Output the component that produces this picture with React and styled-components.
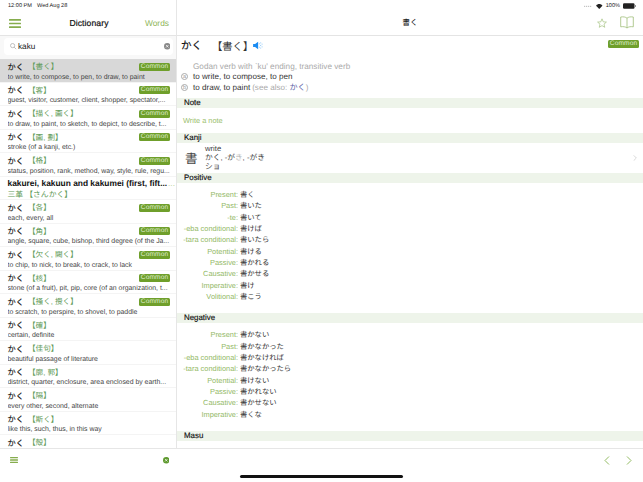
import React from "react";
import styled, { createGlobalStyle } from "styled-components";

const Global = createGlobalStyle`
  html, body { margin: 0; padding: 0; background: #fff; }
  body { font-family: "Liberation Sans", "Noto Sans CJK JP", sans-serif; text-rendering: geometricPrecision; }
  * { box-sizing: border-box; }
`;

const Page = styled.div`
  position: relative; width: 643px; height: 482px; overflow: hidden; display: flex; background: #fff;
`;
const Side = styled.aside`
  width: 177px; flex: none; display: flex; flex-direction: column; height: 100%;
`;
const SideTop = styled.div`
  border-right: 1px solid #e6e6e6; height: 36px; flex: none; display: flex; flex-direction: column; border-bottom: 1px solid #e4e4e4;
`;
const Status = styled.div`
  height: 12px; flex: none; display: flex; align-items: center; gap: ${p => (p.$end ? 3 : 5)}px; font-size: 5.6px; color: #222;
  padding: ${p => (p.$end ? "0 7px 0 0" : "0 8px")};
  justify-content: ${p => (p.$end ? "flex-end" : "flex-start")};
`;
const NavBar = styled.div`
  flex: 1; display: grid; grid-template-columns: 1fr auto 1fr; align-items: center; padding: 0 7px 1px 9px;
`;
const NavTitle = styled.div`
  font-size: 8.6px; color: #111; letter-spacing: .1px; -webkit-text-stroke: .2px #111;
`;
const NavLink = styled.span`
  font-size: 8.4px; color: #8fb65a; justify-self: end;
`;
const SearchWrap = styled.div`
  flex: none; height: 23px; padding: 2px 3px 4px 4px; background: #f8f8f8; border-right: 1px solid #e6e6e6;
`;
const SearchBox = styled.div`
  height: 17px; background: #fff; border-radius: 4px; display: flex; align-items: center; padding: 0 3px 0 6px; gap: 1.5px;
`;
const SearchText = styled.span`
  flex: 1; font-size: 8.2px; color: #222;
`;
const List = styled.div`
  flex: 1; min-height: 0; overflow: hidden; border-right: 1px solid #e6e6e6; background: #f5f5f5;
`;
const Row = styled.div`
  height: 23.5px; padding: 1.5px ${p => (p.$tight ? 1 : 6)}px 0 7.5px; border-bottom: 1.5px solid #f4f4f4; overflow: hidden;
  background: ${p => (p.$selected ? "#d8d8d8" : "#fff")};
`;
const RowHead = styled.div`
  display: flex; align-items: center; height: 12px; white-space: nowrap;
`;
const Kana = styled.span`
  font-size: 8.2px; color: #111; width: 20.5px; flex: none; -webkit-text-stroke: .15px #111;
`;
const Kanji = styled.span`
  flex: 1; font-size: 7.6px; color: #5f9b58;
`;
const Badge = styled.span`
  flex: none; display: block; height: 8px; width: 31px; border-radius: 1.5px; background: #6f9f2b; color: #dfeccc;
  font-size: 6.6px; letter-spacing: .12px; line-height: 8px; text-align: center;
`;
const Meaning = styled.div`
  font-size: 6.9px; line-height: 9px; color: #444; white-space: nowrap; overflow: hidden;
`;
const BoldHead = styled.div`
  font-size: 8.4px; font-weight: 700; color: #111; white-space: nowrap; height: 11.5px; line-height: 11.5px; display: flex; justify-content: space-between;
`;
const Dots = styled.span`
  color: #b9d19a; font-weight: 400;
`;
const GreenLine = styled.div`
  font-size: 7.8px; line-height: 9px; color: #5f9b58; white-space: nowrap;
`;
const Toolbar = styled.div`
  flex: none; height: 34px; border-top: 1px solid #e6e6e6; background: #fff; display: flex; align-items: flex-start;
  justify-content: ${p => (p.$right ? "flex-end" : "space-between")}; gap: ${p => (p.$right ? 16 : 0)}px;
  padding: ${p => (p.$right ? "7px 11px 0 0" : "8px 8px 0 10px")};
`;
const Main = styled.main`
  flex: 1; min-width: 0; display: flex; flex-direction: column; height: 100%;
`;
const MainTop = styled.div`
  height: 36px; flex: none; display: flex; flex-direction: column; border-bottom: 1px solid #e4e4e4;
`;
const MainNav = styled.div`
  flex: 1; display: flex; align-items: center; justify-content: flex-end; padding: 0 9px 2px 0; gap: 13px; position: relative;
`;
const CenterTitle = styled.div`
  position: absolute; left: 0; right: 0; text-align: center; font-size: 7.8px; color: #111;
`;
const StatusRight = styled.span`
  font-size: 5.6px; color: #222;
`;
const Detail = styled.div`
  flex: 1; min-height: 0; overflow: hidden;
`;
const Title = styled.div`
  display: flex; align-items: center; height: 17px; padding: 0 4px; margin-top: 1px; white-space: nowrap;
`;
const TitleKana = styled.span`
  font-size: 10.5px; color: #111; width: 31px; -webkit-text-stroke: .15px #111;
`;
const TitleKanji = styled.span`
  font-size: 10.3px; color: #333;
`;
const TitleBadge = styled(Badge)`
  margin-left: auto; margin-top: -3px;
`;
const Pos = styled.div`
  font-size: 8.2px; color: #aaa; padding-left: 16px; margin-top: 8px; line-height: 9px; white-space: nowrap;
`;
const Sense = styled.div`
  display: flex; align-items: center; font-size: 8.1px; color: #333; height: 11px; padding-left: 4px; white-space: nowrap;
`;
const Letter = styled.span`
  width: 7px; height: 7px; border-radius: 50%; border: .5px solid #aaa; color: #999; font-size: 5.5px; line-height: 6px; text-align: center; display: block; margin-right: 5px; flex: none;
`;
const Muted = styled.span`
  color: #aaa; margin-left: 2px;
`;
const SeeLink = styled.span`
  color: #5e5fa8;
`;
const Section = styled.div`
  background: #eef4ea; height: 10px; font-size: 7.9px; line-height: 10px; color: #111; padding-left: 7px; margin-top: ${p => p.$mt || 0}px; -webkit-text-stroke: .15px #111;
`;
const NoteLink = styled.div`
  font-size: 7.4px; color: #9bc06d; padding-left: 6px; height: 25px; display: flex; align-items: center; padding-bottom: 1px;
`;
const KanjiRow = styled.div`
  display: flex; align-items: center; height: 29.5px; padding: 0 6px 0 8px;
`;
const BigKanji = styled.span`
  font-size: 12.5px; color: #444; width: 20px; flex: none;
`;
const KanjiInfo = styled.div`
  flex: 1; font-size: 7.7px; line-height: 9.3px; color: #444;
`;
const Faint = styled.span`
  color: #bbb;
`;
const Conj = styled.div`
  display: grid; grid-template-columns: 61px 1fr; column-gap: 2px; padding-top: 6.5px; line-height: 11.33px; grid-auto-rows: 11.33px;
`;
const ConjLabel = styled.span`
  font-size: 7.4px; color: #93b966; text-align: right; white-space: nowrap;
`;
const ConjValue = styled.span`
  font-size: 7.3px; color: #333; white-space: nowrap;
`;
const Home = styled.div`
  position: absolute; left: 240px; width: 163px; top: 475px; height: 3px; border-radius: 2px; background: #111;
`;

const GREEN = "#86ad4e";

const Burger = ({ w, h, t }) => (
  <svg width={w} height={h} viewBox={`0 0 ${w} ${h}`}>
    <rect y="0" width={w} height={t} fill={GREEN} rx=".5" />
    <rect y={(h - t) / 2} width={w} height={t} fill={GREEN} rx=".5" />
    <rect y={h - t} width={w} height={t} fill={GREEN} rx=".5" />
  </svg>
);
const SearchIcon = () => (
  <svg width="6.5" height="6.5" viewBox="0 0 8 8" fill="none" stroke="#aaa" strokeWidth=".9">
    <circle cx="3.2" cy="3.2" r="2.6" /><path d="M5 5l2.6 2.6" />
  </svg>
);
const ClearIcon = ({ bg, size }) => (
  <svg width={size} height={size} viewBox="0 0 7 7">
    <circle cx="3.5" cy="3.5" r="3.5" fill={bg} />
    <path d="M2.2 2.2l2.6 2.6M4.8 2.2L2.2 4.8" stroke="#fff" strokeWidth=".8" />
  </svg>
);
const Speaker = () => (
  <svg width="11" height="9" viewBox="0 0 12 10">
    <path d="M0 3.2h2.2L5.6.8v8.4L2.2 6.8H0z" fill="#1b8cf2" />
    <path d="M7 2.6v1M7 6.4v1M8.4 1.6v1M8.4 4.4v1.2M8.4 7.4v1M10 3v1M10 6v1" stroke="#7cc0f8" strokeWidth=".9" />
  </svg>
);
const Star = () => (
  <svg width="10" height="10" viewBox="0 0 24 24" fill="none" stroke="#9fbe78" strokeWidth="1.6" strokeLinejoin="round">
    <path d="M12 2l3 7.2 7.6.6-5.8 5 1.8 7.5L12 18.3 5.4 22.3l1.8-7.5-5.8-5L9 9.2z" />
  </svg>
);
const Book = () => (
  <svg width="14" height="13" viewBox="0 0 14 13" fill="none" stroke="#9fbe78" strokeWidth=".8">
    <path d="M7 2.2C5.6.9 3.2.6.7 1v9.8c2.5-.4 4.9-.1 6.3 1.2 1.4-1.3 3.8-1.6 6.3-1.2V1C10.8.6 8.4.9 7 2.2zM7 2.2V12" />
  </svg>
);
const Signal = () => (
  <svg width="9" height="2" viewBox="0 0 9 2" fill="#c4c4c4">
    <rect x="0" y=".8" width="1.2" height="1.2" /><rect x="2" y=".8" width="1.2" height="1.2" />
    <rect x="4" y=".8" width="1.2" height="1.2" /><rect x="6" y=".8" width="1.2" height="1.2" />
  </svg>
);
const Wifi = () => (
  <svg width="6.5" height="5" viewBox="0 0 14 11" fill="#222">
    <path d="M7 11L0 3.6C4-.9 10-.9 14 3.6z" />
  </svg>
);
const Battery = () => (
  <svg width="13" height="6" viewBox="0 0 13 6">
    <rect x="0" y=".3" width="11.5" height="5.4" rx="1.2" fill="#222" />
    <rect x="11.9" y="2" width="1" height="2" fill="#888" />
  </svg>
);
const Chevron = ({ left, color = "#92bb62", w = 6, h = 9 }) => (
  <svg width={w} height={h} viewBox="0 0 6 9" fill="none" stroke={color} strokeWidth="1">
    <path d={left ? "M5 .5L1 4.5l4 4" : "M1 .5l4 4-4 4"} />
  </svg>
);

const rows = [
  { k: "【書く】", m: "to write, to compose, to pen, to draw, to paint", c: 1, s: 1 },
  { k: "【客】", m: "guest, visitor, customer, client, shopper, spectator,...", c: 1 },
  { k: "【描く, 画く】", m: "to draw, to paint, to sketch, to depict, to describe, t...", c: 1 },
  { k: "【画, 劃】", m: "stroke (of a kanji, etc.)", c: 1 },
  { k: "【格】", m: "status, position, rank, method, way, style, rule, regu...", c: 1 },
  { special: 1 },
  { k: "【各】", m: "each, every, all", c: 1 },
  { k: "【角】", m: "angle, square, cube, bishop, third degree (of the Ja...", c: 1 },
  { k: "【欠く, 闕く】", m: "to chip, to nick, to break, to crack, to lack", c: 1 },
  { k: "【核】", m: "stone (of a fruit), pit, pip, core (of an organization, t...", c: 1 },
  { k: "【掻く, 攪く】", m: "to scratch, to perspire, to shovel, to paddle", c: 1 },
  { k: "【確】", m: "certain, definite" },
  { k: "【佳句】", m: "beautiful passage of literature" },
  { k: "【廓, 郭】", m: "district, quarter, enclosure, area enclosed by earth..." },
  { k: "【隔】", m: "every other, second, alternate" },
  { k: "【斯く】", m: "like this, such, thus, in this way" },
  { k: "【殻】", m: "" },
];

const positive = [
  ["Present:", "書く"], ["Past:", "書いた"], ["-te:", "書いて"], ["-eba conditional:", "書けば"],
  ["-tara conditional:", "書いたら"], ["Potential:", "書ける"], ["Passive:", "書かれる"],
  ["Causative:", "書かせる"], ["Imperative:", "書け"], ["Volitional:", "書こう"],
];
const negative = [
  ["Present:", "書かない"], ["Past:", "書かなかった"], ["-eba conditional:", "書かなければ"],
  ["-tara conditional:", "書かなかったら"], ["Potential:", "書けない"], ["Passive:", "書かれない"],
  ["Causative:", "書かせない"], ["Imperative:", "書くな"],
];

const ConjTable = ({ items }) => (
  <Conj>
    {items.map(([l, v]) => (
      <React.Fragment key={l}>
        <ConjLabel>{l}</ConjLabel>
        <ConjValue>{v}</ConjValue>
      </React.Fragment>
    ))}
  </Conj>
);

export default function App() {
  return (
    <Page>
      <Global />
      <Side>
        <SideTop>
          <Status><span>12:00 PM</span><span>Wed Aug 28</span></Status>
          <NavBar>
            <Burger w={12} h={9} t={1.7} />
            <NavTitle>Dictionary</NavTitle>
            <NavLink>Words</NavLink>
          </NavBar>
        </SideTop>
        <SearchWrap>
          <SearchBox>
            <SearchIcon />
            <SearchText>kaku</SearchText>
            <ClearIcon bg="#8a8a8a" size={6.5} />
          </SearchBox>
        </SearchWrap>
        <List>
          {rows.map((r, i) =>
            r.special ? (
              <Row key={i} $tight>
                <BoldHead><span>kakurei, kakuun and kakumei (first, fift...</span><Dots>...</Dots></BoldHead>
                <GreenLine>三革 【さんかく】</GreenLine>
              </Row>
            ) : (
              <Row key={i} $selected={r.s}>
                <RowHead>
                  <Kana>かく</Kana>
                  <Kanji>{r.k}</Kanji>
                  {r.c ? <Badge>Common</Badge> : null}
                </RowHead>
                {r.m ? <Meaning>{r.m}</Meaning> : null}
              </Row>
            )
          )}
        </List>
        <Toolbar>
          <Burger w={8} h={6} t={1.3} />
          <ClearIcon bg="#5f9a2f" size={6.5} />
        </Toolbar>
      </Side>
      <Main>
        <MainTop>
          <Status $end>
            <Signal /><Wifi /><StatusRight>100%</StatusRight><Battery />
          </Status>
          <MainNav>
            <CenterTitle>書く</CenterTitle>
            <Star />
            <Book />
          </MainNav>
        </MainTop>
        <Detail>
          <Title>
            <TitleKana>かく</TitleKana>
            <TitleKanji>【書く】</TitleKanji>
            <Speaker />
            <TitleBadge>Common</TitleBadge>
          </Title>
          <Pos>Godan verb with `ku' ending, transitive verb</Pos>
          <Sense><Letter>a</Letter>to write, to compose, to pen</Sense>
          <Sense><Letter>b</Letter>to draw, to paint <Muted>(see also: <SeeLink>かく</SeeLink>)</Muted></Sense>
          <Section $mt={5}>Note</Section>
          <NoteLink>Write a note</NoteLink>
          <Section>Kanji</Section>
          <KanjiRow>
            <BigKanji>書</BigKanji>
            <KanjiInfo>
              write<br />かく, -が<Faint>き</Faint>, -がき<br />ショ
            </KanjiInfo>
            <Chevron color="#c6c6c6" w={4} h={6} />
          </KanjiRow>
          <Section>Positive</Section>
          <ConjTable items={positive} />
          <Section $mt={10.5}>Negative</Section>
          <ConjTable items={negative} />
          <Section $mt={11}>Masu</Section>
        </Detail>
        <Toolbar $right>
          <Chevron left />
          <Chevron />
        </Toolbar>
      </Main>
      <Home />
    </Page>
  );
}
